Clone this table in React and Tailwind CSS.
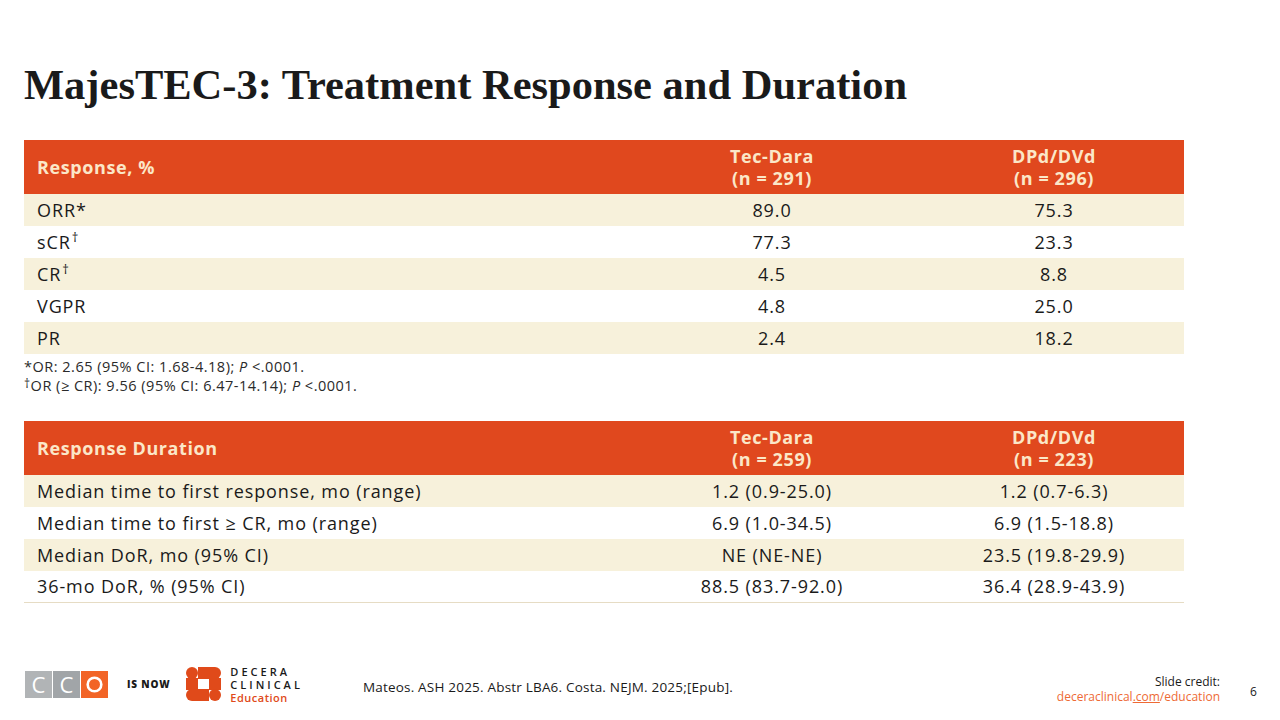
import React from 'react';

const sans = { fontFamily: '"Open Sans", "Liberation Sans", sans-serif' };

const responseRows = [
  { label: 'ORR*', a: '89.0', b: '75.3' },
  { label: 'sCR', sup: '†', a: '77.3', b: '23.3' },
  { label: 'CR', sup: '†', a: '4.5', b: '8.8' },
  { label: 'VGPR', a: '4.8', b: '25.0' },
  { label: 'PR', a: '2.4', b: '18.2' },
];

const durationRows = [
  { label: 'Median time to first response, mo (range)', a: '1.2 (0.9-25.0)', b: '1.2 (0.7-6.3)' },
  { label: 'Median time to first ≥ CR, mo (range)', a: '6.9 (1.0-34.5)', b: '6.9 (1.5-18.8)' },
  { label: 'Median DoR, mo (95% CI)', a: 'NE (NE-NE)', b: '23.5 (19.8-29.9)' },
  { label: '36-mo DoR, % (95% CI)', a: '88.5 (83.7-92.0)', b: '36.4 (28.9-43.9)' },
];

const HeaderRow = ({ title, nA, nB }) => (
  <div className="grid grid-cols-[596px_304px_260px] h-[54px] bg-[#e0481e] text-[#fbe7c8] font-bold text-[18px] leading-[22px] tracking-[0.6px]">
    <div className="flex items-center pl-[13px]">{title}</div>
    <div className="flex flex-col items-center justify-center text-center">
      <span>Tec-Dara</span>
      <span>(n = {nA})</span>
    </div>
    <div className="flex flex-col items-center justify-center text-center">
      <span>DPd/DVd</span>
      <span>(n = {nB})</span>
    </div>
  </div>
);

const DataRow = ({ row, shaded, border }) => (
  <div
    className={`grid grid-cols-[596px_304px_260px] h-[32px] items-center text-[18px] tracking-[0.9px] text-[#1a1a1a] ${
      shaded ? 'bg-[#f7f1db]' : 'bg-white'
    } ${border ? 'border-b border-[#e6dcc4]' : ''}`}
  >
    <div className="pl-[13px]">
      {row.label}
      {row.sup && <span className="text-[13px] relative -top-[7px] ml-[1px]">{row.sup}</span>}
    </div>
    <div className="text-center">{row.a}</div>
    <div className="text-center">{row.b}</div>
  </div>
);

const CcoLogo = () => (
  <div className="flex gap-[1px]">
    <div className="w-[27px] h-[27px] bg-[#b1b4b6] flex items-center justify-center text-white text-[22px] leading-none">C</div>
    <div className="w-[27px] h-[27px] bg-[#a1a5a8] flex items-center justify-center text-white text-[22px] leading-none">C</div>
    <div className="w-[27px] h-[27px] bg-[#f26426] flex items-center justify-center">
      <svg width="17" height="17" viewBox="0 0 17 17">
        <circle cx="8.5" cy="8.5" r="6.8" fill="none" stroke="#fff" strokeWidth="2.6" />
      </svg>
    </div>
  </div>
);

const DeceraMark = () => (
  <svg width="35" height="34" viewBox="0 0 35 34">
    <circle cx="6" cy="6" r="6" fill="#e04a1a" />
    <rect x="12" y="0" width="23" height="12" rx="6" fill="#e04a1a" />
    <rect x="12" y="0" width="10" height="12" fill="#e04a1a" />
    <rect x="0" y="11" width="12" height="12" fill="#e04a1a" />
    <rect x="23" y="11" width="12" height="12" fill="#e04a1a" />
    <rect x="0" y="22" width="23" height="12" rx="6" fill="#e04a1a" />
    <rect x="13" y="22" width="10" height="12" fill="#e04a1a" />
    <circle cx="29" cy="28" r="6" fill="#e04a1a" />
  </svg>
);

export default function App() {
  return (
    <div className="w-[1280px] h-[720px] bg-white relative overflow-hidden" style={sans}>
      <div className="pl-[24px] pt-[60px]">
        <h1
          className="text-[42.5px] leading-[50px] font-bold text-[#1a1a1a]"
          style={{ fontFamily: '"Liberation Serif", "Times New Roman", serif' }}
        >
          MajesTEC-3: Treatment Response and Duration
        </h1>

        <div className="mt-[30px] w-[1160px]">
          <HeaderRow title="Response, %" nA="291" nB="296" />
          {responseRows.map((r, i) => (
            <DataRow key={r.label} row={r} shaded={i % 2 === 0} />
          ))}
        </div>

        <div className="mt-[3px] text-[14.5px] leading-[19px] tracking-[0.5px] text-[#2a2a2a]">
          <p>
            *OR: 2.65 (95% CI: 1.68-4.18); <i>P</i> &lt;.0001.
          </p>
          <p>
            <span className="text-[12px] relative -top-[3px]">†</span>OR (≥ CR): 9.56 (95% CI: 6.47-14.14); <i>P</i> &lt;.0001.
          </p>
        </div>

        <div className="mt-[25px] w-[1160px]">
          <HeaderRow title="Response Duration" nA="259" nB="223" />
          {durationRows.map((r, i) => (
            <DataRow key={r.label} row={r} shaded={i % 2 === 0} border={i === durationRows.length - 1} />
          ))}
        </div>
      </div>

      <div className="absolute left-[25px] right-0 top-[664px] h-[40px] flex items-center">
        <CcoLogo />
        <span className="ml-[19px] text-[10px] font-extrabold tracking-[0.8px] text-[#1a1a1a]">IS NOW</span>
        <div className="ml-[16px]">
          <DeceraMark />
        </div>
        <div className="ml-[9px] flex flex-col text-[11px] leading-[13px] font-semibold tracking-[3px] text-[#1a1a1a]">
          <span>DECERA</span>
          <span>CLINICAL</span>
          <span className="text-[#e04a1a] tracking-[0.5px]">Education</span>
        </div>
        <span className="ml-[60px] mt-[6px] text-[13.5px] tracking-[0.2px] text-[#1a1a1a]">
          Mateos. ASH 2025. Abstr LBA6. Costa. NEJM. 2025;[Epub].
        </span>
        <div className="ml-auto mr-[60px] mt-[10px] flex flex-col items-end text-[12px] leading-[15px]">
          <span className="text-[#1a1a1a]">Slide credit:</span>
          <span className="text-[#ee6a35]">
            deceraclinical<span className="underline">.com</span>/education
          </span>
        </div>
      </div>
      <span className="absolute left-[1250px] top-[683px] text-[12px] text-[#1a1a1a]">6</span>
    </div>
  );
}
